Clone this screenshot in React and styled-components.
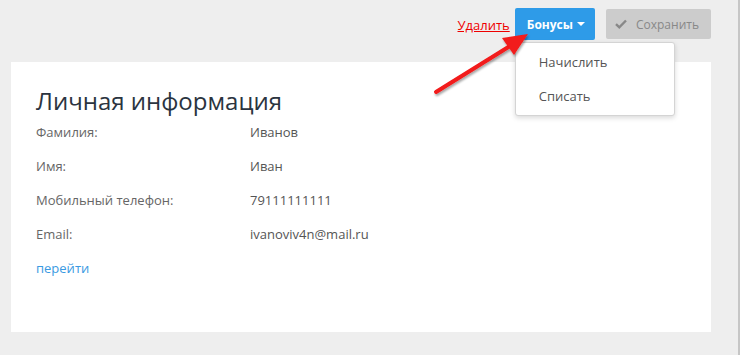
import React from "react";
import styled, { createGlobalStyle } from "styled-components";

const GlobalStyle = createGlobalStyle`
  html, body {
    margin: 0;
    padding: 0;
    background: #eeeeee;
    font-family: "Open Sans", "Noto Sans", sans-serif;
  }
`;

function App() {
  const rows = [
    { label: "Фамилия:", value: "Иванов" },
    { label: "Имя:", value: "Иван" },
    { label: "Мобильный телефон:", value: "79111111111" },
    { label: "Email:", value: "ivanoviv4n@mail.ru" },
  ];

  return (
    <Page>
      <GlobalStyle />
      <Container>
        <Toolbar>
          <DeleteLink href="#">Удалить</DeleteLink>
          <DropWrap>
            <BonusBtn>
              Бонусы <Caret />
            </BonusBtn>
            <Menu>
              <MenuItem>Начислить</MenuItem>
              <MenuItem>Списать</MenuItem>
            </Menu>
          </DropWrap>
          <SaveBtn disabled>
            <svg width="12" height="10" viewBox="0 0 12 10">
              <path
                d="M1 5.2 L4.3 8.3 L11 1.5"
                fill="none"
                stroke="#888"
                strokeWidth="2.4"
              />
            </svg>
            Сохранить
          </SaveBtn>
        </Toolbar>

        <Card>
          <Title>Личная информация</Title>
          {rows.map((r) => (
            <Row key={r.label}>
              <Label>{r.label}</Label>
              <Value>{r.value}</Value>
            </Row>
          ))}
          <Row>
            <GoLink href="#">перейти</GoLink>
          </Row>
        </Card>
      </Container>

      {/* red annotation arrow over the page */}
      <Arrow width="740" height="355" viewBox="0 0 740 355">
        <defs>
          <filter id="sh" x="-20%" y="-20%" width="140%" height="140%">
            <feDropShadow dx="1" dy="2" stdDeviation="1.2" floodColor="#000" floodOpacity="0.35" />
          </filter>
        </defs>
        <g filter="url(#sh)">
          <line x1="436" y1="92" x2="510" y2="46" stroke="#f21a1a" strokeWidth="4" strokeLinecap="round" />
          <polygon points="528,34 502,38 514,55" fill="#f21a1a" />
        </g>
      </Arrow>
    </Page>
  );
}

export default App;

const Page = styled.div`
  position: relative;
  width: 738px;
  height: 355px;
  border-right: 2px solid #c6c6c6;
  overflow: hidden;
`;

const Container = styled.div`
  width: 700px;
  margin-left: 11px;
`;

const Toolbar = styled.div`
  height: 62px;
  display: flex;
  justify-content: flex-end;
  align-items: flex-start;
  padding-top: 8px;
  box-sizing: border-box;
`;

const DeleteLink = styled.a`
  color: #ee0000;
  font-size: 13px;
  text-decoration: underline;
  margin-top: 8px;
  margin-right: 5px;
`;

const DropWrap = styled.div`
  position: relative;
  margin-right: 11px;
`;

const BonusBtn = styled.button`
  height: 32px;
  padding: 0 10px 0 12px;
  border: none;
  border-radius: 2px;
  background: #2e9be8;
  color: #fff;
  font-family: "Open Sans", sans-serif;
  font-weight: 700;
  font-size: 12px;
  display: flex;
  align-items: center;
  gap: 4px;
`;

const Caret = styled.span`
  width: 0;
  height: 0;
  border-left: 4px solid transparent;
  border-right: 4px solid transparent;
  border-top: 4px solid #fff;
`;

const Menu = styled.div`
  position: absolute;
  top: 34px;
  left: 0;
  width: 160px;
  box-sizing: border-box;
  padding: 2px 0;
  background: #fff;
  border: 1px solid #d4d4d4;
  border-radius: 3px;
  box-shadow: 0 2px 5px rgba(0, 0, 0, 0.15);
  z-index: 2;
`;

const MenuItem = styled.div`
  height: 34px;
  line-height: 34px;
  padding-left: 23px;
  font-size: 13px;
  color: #555;
`;

const SaveBtn = styled.button`
  height: 30px;
  margin-top: 1px;
  padding: 0 12px 0 9px;
  border: none;
  border-radius: 2px;
  background: #cccccc;
  color: #888;
  font-family: "Open Sans", sans-serif;
  font-size: 12px;
  display: flex;
  align-items: center;
  gap: 9px;
`;

const Card = styled.div`
  background: #fff;
  height: 270px;
  box-sizing: border-box;
  padding: 25px 25px 0;
`;

const Title = styled.h2`
  margin: 0;
  font-weight: 400;
  font-size: 24px;
  line-height: 28px;
  color: #2b3440;
`;

const Row = styled.div`
  display: flex;
  height: 34px;
  align-items: center;
  font-size: 13px;
`;

const Label = styled.div`
  width: 214px;
  color: #666;
`;

const Value = styled.div`
  color: #555;
`;

const GoLink = styled.a`
  color: #3a9ae2;
  text-decoration: none;
`;

const Arrow = styled.svg`
  position: absolute;
  left: 0;
  top: 0;
  pointer-events: none;
  z-index: 3;
`;
